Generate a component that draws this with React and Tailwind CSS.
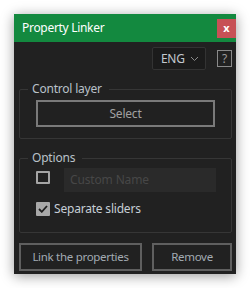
export default function App() {
  return (
    <div className="min-h-[288px] w-[250px] bg-white pt-[14px] pl-[14px]" style={{ fontFamily: '"Noto Sans", "Open Sans", sans-serif' }}>
      <div className="w-[222px] h-[260px] bg-[#212121] flex flex-col shadow-[0_2px_12px_rgba(0,0,0,0.4)]">
        {/* title bar */}
        <div className="h-[28px] bg-[#13893f] flex items-center justify-between pl-[8px]">
          <span className="text-[12px] tracking-[-0.3px] text-white leading-none">Property Linker</span>
          <button className="w-[19px] h-[19px] mt-[1px] bg-[#c75156] text-white text-[11px] font-bold leading-none flex items-center justify-center pb-[2px]">x</button>
        </div>

        <div className="flex flex-col pl-[5px] pr-[4px] text-[11px] tracking-[-0.15px]">
          {/* language row */}
          <div className="flex items-center justify-end mt-[5px]">
            <div className="w-[54px] h-[23px] bg-[#1b1b1b] border border-[#333] rounded-[2px] flex items-center justify-between pl-[8px] pr-[6px]">
              <span className="text-[12px] tracking-[-0.3px] text-[#c2c8cf] leading-none">ENG</span>
              <svg width="9" height="6" viewBox="0 0 9 6" fill="none">
                <path d="M1 1l3.5 3.5L8 1" stroke="#8a8a8a" strokeWidth="1" />
              </svg>
            </div>
            <div className="ml-[11px] w-[15px] h-[17px] border border-[#8a8a8a] flex items-center justify-center text-[12px] text-[#9a9a9a] leading-none">?</div>
          </div>

          {/* control layer */}
          <fieldset className="mt-[11px] border border-[#363636] rounded-[2px] pl-[16px] pr-[16px] pt-[3px] pb-[11px]">
            <legend className="-ml-[8px] pl-[4px] pr-[7px] text-[12px] tracking-[-0.2px] leading-[16px] text-[#b9c1c9]">Control layer</legend>
            <button className="w-full h-[27px] border-2 border-[#7a7a7a] text-[12px] tracking-[-0.2px] text-[#a2a2a2] flex items-center justify-center">Select</button>
          </fieldset>

          {/* options */}
          <fieldset className="mt-[11px] border border-[#363636] rounded-[2px] pl-[16px] pr-[15px] pt-[2px] pb-[16px]">
            <legend className="-ml-[8px] pl-[4px] pr-[7px] text-[12px] tracking-[-0.2px] leading-[16px] text-[#b9c1c9]">Options</legend>
            <div className="flex items-start">
              <div className="w-[14px] h-[13px] mt-[3px] border-2 border-[#a5a5a5] rounded-[1px]" />
              <div className="ml-[14px] flex-1 h-[24px] bg-[#2a2a2a] flex items-center pl-[6px] text-[12px] text-[#474747]">Custom Name</div>
            </div>
            <div className="flex items-center mt-[10px]">
              <div className="w-[14px] h-[14px] bg-[#a8a8a8] rounded-[1px] flex items-center justify-center">
                <svg width="10" height="8" viewBox="0 0 10 8" fill="none">
                  <path d="M1 4l2.8 2.8L9 1" stroke="#1e1e1e" strokeWidth="1.8" />
                </svg>
              </div>
              <span className="ml-[4px] text-[12px] tracking-[-0.2px] text-[#c6ced6] leading-none">Separate sliders</span>
            </div>
          </fieldset>

          {/* actions */}
          <div className="flex mt-[10px] gap-[10px]">
            <button className="w-[123px] h-[28px] border-2 border-[#5f5f5f] text-[11.5px] tracking-[-0.3px] text-[#a3abb3] flex items-center justify-center">Link the properties</button>
            <button className="w-[80px] h-[28px] border-2 border-[#5f5f5f] text-[11.5px] tracking-[-0.3px] text-[#a3abb3] flex items-center justify-center">Remove</button>
          </div>
        </div>
      </div>
    </div>
  );
}
